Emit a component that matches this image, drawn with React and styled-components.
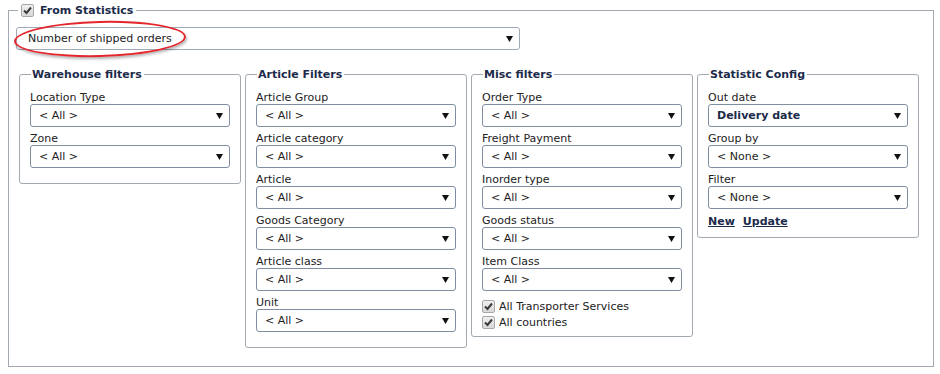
import React from 'react';
import styled, { createGlobalStyle } from 'styled-components';

const GlobalStyle = createGlobalStyle`
  body {
    margin: 0;
    background: #ffffff;
    font-family: "DejaVu Sans", Verdana, sans-serif;
    font-size: 11px;
    color: #222222;
  }
`;

const warehouse = [
  { label: 'Location Type', value: '< All >' },
  { label: 'Zone', value: '< All >' },
];

const article = [
  { label: 'Article Group', value: '< All >' },
  { label: 'Article category', value: '< All >' },
  { label: 'Article', value: '< All >' },
  { label: 'Goods Category', value: '< All >' },
  { label: 'Article class', value: '< All >' },
  { label: 'Unit', value: '< All >' },
];

const misc = [
  { label: 'Order Type', value: '< All >' },
  { label: 'Freight Payment', value: '< All >' },
  { label: 'Inorder type', value: '< All >' },
  { label: 'Goods status', value: '< All >' },
  { label: 'Item Class', value: '< All >' },
];

const config = [
  { label: 'Out date', value: 'Delivery date', bold: true },
  { label: 'Group by', value: '< None >' },
  { label: 'Filter', value: '< None >' },
];

const Arrow = () => (
  <svg width="7" height="7" viewBox="0 0 7 7">
    <path d="M0 1 L7 1 L3.5 7 Z" fill="#111" />
  </svg>
);

const Check = () => (
  <svg width="11" height="11" viewBox="0 0 11 11">
    <path d="M2 5.5 L4.5 8 L9 2.5" fill="none" stroke="#3a3a3a" strokeWidth="2" />
  </svg>
);

const Select = ({ value, bold }) => (
  <SelectBox $bold={bold}>
    <span>{value}</span>
    <Arrow />
  </SelectBox>
);

const Field = ({ label, value, bold }) => (
  <FieldRow>
    <Label>{label}</Label>
    <Select value={value} bold={bold} />
  </FieldRow>
);

const Group = ({ title, items, bottom = 15, children }) => (
  <Panel $bottom={bottom}>
    <PanelLegend>{title}</PanelLegend>
    {items.map(item => (
      <Field key={item.label} {...item} />
    ))}
    {children}
  </Panel>
);

export default function App() {
  return (
    <>
      <GlobalStyle />
      <Outer>
        <OuterLegend>
          <CheckBox>
            <Check />
          </CheckBox>
          From Statistics
        </OuterLegend>
        <MainRow>
          <MainSelect>
            <span>Number of shipped orders</span>
            <Arrow />
          </MainSelect>
          <Ring />
        </MainRow>
        <Columns>
          <Group title="Warehouse filters" items={warehouse} />
          <Group title="Article Filters" items={article} />
          <Group title="Misc filters" items={misc} bottom={6}>
            <CheckList>
              <CheckLine>
                <CheckBox>
                  <Check />
                </CheckBox>
                All Transporter Services
              </CheckLine>
              <CheckLine>
                <CheckBox>
                  <Check />
                </CheckBox>
                All countries
              </CheckLine>
            </CheckList>
          </Group>
          <Group title="Statistic Config" items={config} bottom={9}>
            <Links>
              <LinkText>New</LinkText>
              <LinkText>Update</LinkText>
            </Links>
          </Group>
        </Columns>
      </Outer>
    </>
  );
}

const Outer = styled.fieldset`
  margin: 4px 6px 0 8px;
  padding: 10px 7px 18px 7px;
  border: 1px solid #a3a9b1;
  min-width: 0;
`;

const OuterLegend = styled.legend`
  display: flex;
  align-items: center;
  gap: 6px;
  padding: 0 3px 0 3px;
  margin-left: 2px;
  font-weight: bold;
  font-size: 11px;
  color: #1c2b4a;
`;

const MainRow = styled.div`
  position: relative;
  width: 504px;
`;

const SelectBox = styled.div`
  display: flex;
  align-items: center;
  justify-content: space-between;
  height: 23px;
  box-sizing: border-box;
  padding: 0 6px 0 8px;
  border: 1px solid #808ea2;
  border-radius: 3px;
  background: #ffffff;
  font-weight: ${p => (p.$bold ? 'bold' : 'normal')};
  color: ${p => (p.$bold ? '#1c2b4a' : '#222222')};
`;

const MainSelect = styled(SelectBox)`
  padding-left: 11px;
  border-color: #a0aab6;
`;

const Ring = styled.div`
  position: absolute;
  left: -2px;
  top: -6px;
  width: 172px;
  height: 36px;
  box-sizing: border-box;
  border: 2px solid #e3262c;
  border-radius: 50%;
  box-shadow: 1px 2px 3px rgba(0, 0, 0, 0.3);
  transform: rotate(-1.5deg);
  pointer-events: none;
`;

const Columns = styled.div`
  display: flex;
  align-items: flex-start;
  gap: 4px;
  margin-top: 18px;
  padding-left: 3px;
`;

const Panel = styled.fieldset`
  width: 222px;
  box-sizing: border-box;
  margin: 0;
  padding: 5px 10px ${p => p.$bottom}px 10px;
  border: 1px solid #a3a9b1;
  border-radius: 3px;
  min-width: 0;
`;

const PanelLegend = styled.legend`
  padding: 0 2px 0 1px;
  margin-left: 1px;
  font-weight: bold;
  font-size: 11px;
  color: #1c2b4a;
`;

const FieldRow = styled.div`
  display: flex;
  flex-direction: column;
`;

const Label = styled.div`
  height: 18px;
  line-height: 24px;
`;

const CheckBox = styled.span`
  display: inline-flex;
  align-items: center;
  justify-content: center;
  width: 13px;
  height: 13px;
  box-sizing: border-box;
  border: 1px solid #a8a8a8;
  border-radius: 2px;
  background: linear-gradient(#f0f0f0, #d8d8d8);
`;

const CheckList = styled.div`
  display: flex;
  flex-direction: column;
  margin-top: 7px;
`;

const CheckLine = styled.div`
  display: flex;
  align-items: center;
  gap: 4px;
  height: 16px;
`;

const Links = styled.div`
  display: flex;
  gap: 8px;
  margin-top: 6px;
`;

const LinkText = styled.span`
  font-weight: bold;
  text-decoration: underline;
  color: #1c2b4a;
  cursor: pointer;
`;
